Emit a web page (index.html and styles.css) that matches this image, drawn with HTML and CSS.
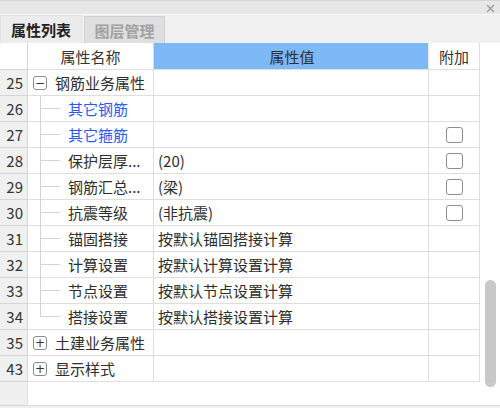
FILE: index.html
```html
<!DOCTYPE html>
<html lang="zh">
<head>
<meta charset="utf-8">
<link rel="stylesheet" href="styles.css">
</head>
<body>
<div class="panel">
  <div class="titlebar">
    <svg class="close" width="9" height="9" viewBox="0 0 9 9"><path d="M1 1L8 8M8 1L1 8" stroke="#9a9a9a" stroke-width="1.3"/></svg>
  </div>
  <div class="tabs">
    <div class="tab active">属性列表</div>
    <div class="tab">图层管理</div>
  </div>
  <div class="main">
    <div class="grid">
      <div class="row head">
        <div class="c num"></div>
        <div class="c name hc">属性名称</div>
        <div class="c val hv">属性值</div>
        <div class="c add hc">附加</div>
      </div>
      <div class="row">
        <div class="c num">25</div>
        <div class="c name parent"><span class="box">−</span>钢筋业务属性</div>
        <div class="c val"></div>
        <div class="c add"></div>
      </div>
      <div class="row">
        <div class="c num">26</div>
        <div class="c name child blue">其它钢筋</div>
        <div class="c val"></div>
        <div class="c add"></div>
      </div>
      <div class="row">
        <div class="c num">27</div>
        <div class="c name child blue">其它箍筋</div>
        <div class="c val"></div>
        <div class="c add"><span class="chk"></span></div>
      </div>
      <div class="row">
        <div class="c num">28</div>
        <div class="c name child">保护层厚...</div>
        <div class="c val">(20)</div>
        <div class="c add"><span class="chk"></span></div>
      </div>
      <div class="row">
        <div class="c num">29</div>
        <div class="c name child">钢筋汇总...</div>
        <div class="c val">(梁)</div>
        <div class="c add"><span class="chk"></span></div>
      </div>
      <div class="row">
        <div class="c num">30</div>
        <div class="c name child">抗震等级</div>
        <div class="c val">(非抗震)</div>
        <div class="c add"><span class="chk"></span></div>
      </div>
      <div class="row">
        <div class="c num">31</div>
        <div class="c name child">锚固搭接</div>
        <div class="c val">按默认锚固搭接计算</div>
        <div class="c add"></div>
      </div>
      <div class="row">
        <div class="c num">32</div>
        <div class="c name child">计算设置</div>
        <div class="c val">按默认计算设置计算</div>
        <div class="c add"></div>
      </div>
      <div class="row">
        <div class="c num">33</div>
        <div class="c name child">节点设置</div>
        <div class="c val">按默认节点设置计算</div>
        <div class="c add"></div>
      </div>
      <div class="row">
        <div class="c num">34</div>
        <div class="c name child last">搭接设置</div>
        <div class="c val">按默认搭接设置计算</div>
        <div class="c add"></div>
      </div>
      <div class="row">
        <div class="c num">35</div>
        <div class="c name parent"><span class="box">+</span>土建业务属性</div>
        <div class="c val"></div>
        <div class="c add"></div>
      </div>
      <div class="row">
        <div class="c num">43</div>
        <div class="c name parent"><span class="box">+</span>显示样式</div>
        <div class="c val"></div>
        <div class="c add"></div>
      </div>
      <div class="filler"><div class="fnum"></div></div>
    </div>
    <div class="scroll"><div class="thumb"></div></div>
  </div>
  <div class="foot"></div>
</div>
</body>
</html>
```

FILE: styles.css
```css
* { box-sizing: border-box; }
html, body { margin: 0; padding: 0; }
body {
  width: 500px;
  height: 408px;
  overflow: hidden;
  background: #f0f0f0;
  font-family: "Noto Sans CJK SC", "Noto Sans", sans-serif;
  font-size: 15px;
  color: #333;
}
.panel { width: 500px; height: 408px; display: flex; flex-direction: column; }
.titlebar {
  height: 14px;
  background: #e7e7e7;
  border-top: 1px solid #d6d6d6;
  display: flex;
  justify-content: flex-end;
  align-items: center;
  padding-right: 5px;
}
.close { display: block; margin-top: 1px; }
.tabs {
  height: 29px;
  background: #f1f1f1;
  border-top: 1px solid #f8f8f8;
  display: flex;
  align-items: flex-end;
}
.tab {
  height: 27px;
  width: 81px;
  display: flex;
  align-items: center;
  justify-content: center;
  color: #a2a2a2;
  background: #dfdfdf;
  border: 1px solid #cfcfcf;
  border-bottom: none;
  margin-left: 2px;
  font-weight: bold;
  line-height: 1;
}
.tab.active {
  margin-left: 0;
  height: 28px;
  width: 82px;
  color: #222;
  background: #ececec;
  border-color: #e2e2e2;
}
.main { display: flex; height: 362px; background: #fff; }
.grid { width: 480px; display: flex; flex-direction: column; }
.row {
  display: grid;
  grid-template-columns: 28px 126px 275px 51px;
  height: 26px;
}
.row.head { height: 27px; }
.c {
  border-right: 1px solid #dedede;
  border-bottom: 1px solid #dedede;
  display: flex;
  align-items: center;
  white-space: nowrap;
  position: relative;
  line-height: 1;
}
.num {
  background: #f0f0f0;
  justify-content: flex-end;
  padding-right: 4px;
  color: #333;
  border-right-color: #d6d6d6;
  border-bottom-color: #d6d6d6;
}
.head .num { background: #fff; }
.hc { justify-content: center; color: #333; }
.hv {
  background: #7db9f6;
  color: #fff;
  justify-content: center;
  padding-right: 2px;
  border-right-color: #e6e6e6;
}
.val { padding-left: 4px; color: #2e2e2e; }
.add { justify-content: center; }
.parent { padding-left: 5px; color: #2e2e2e; }
.box {
  width: 14px;
  height: 14px;
  border: 1px solid #8c8c8c;
  border-radius: 3px;
  display: inline-flex;
  align-items: center;
  justify-content: center;
  font-size: 12px;
  line-height: 1;
  color: #333;
  margin-right: 8px;
  font-family: "DejaVu Sans", sans-serif;
}
.child { padding-left: 40px; color: #2e2e2e; }
.child::before {
  content: "";
  position: absolute;
  left: 12px;
  top: 0;
  bottom: -1px;
  border-left: 1px solid #d3d3d3;
}
.child.last::before { bottom: 12px; }
.child::after {
  content: "";
  position: absolute;
  left: 13px;
  width: 19px;
  top: 12px;
  border-top: 1px solid #d3d3d3;
}
.child.blue { color: #2b5af2; }
.chk {
  width: 17px;
  height: 16px;
  border: 1px solid #8e8e8e;
  border-radius: 3px;
  background: #fff;
  margin-left: 1px;
}
.filler { flex: 1; display: flex; }
.fnum { width: 28px; background: #f0f0f0; border-right: 1px solid #e4e4e4; }
.scroll { width: 20px; position: relative; background: #fff; }
.thumb {
  position: absolute;
  left: 5px;
  top: 237px;
  width: 11px;
  height: 107px;
  border-radius: 6px;
  background: #c8c8c8;
}
.foot { height: 3px; background: #f0f0f0; border-top: 1px solid #d8d8d8; }
```
